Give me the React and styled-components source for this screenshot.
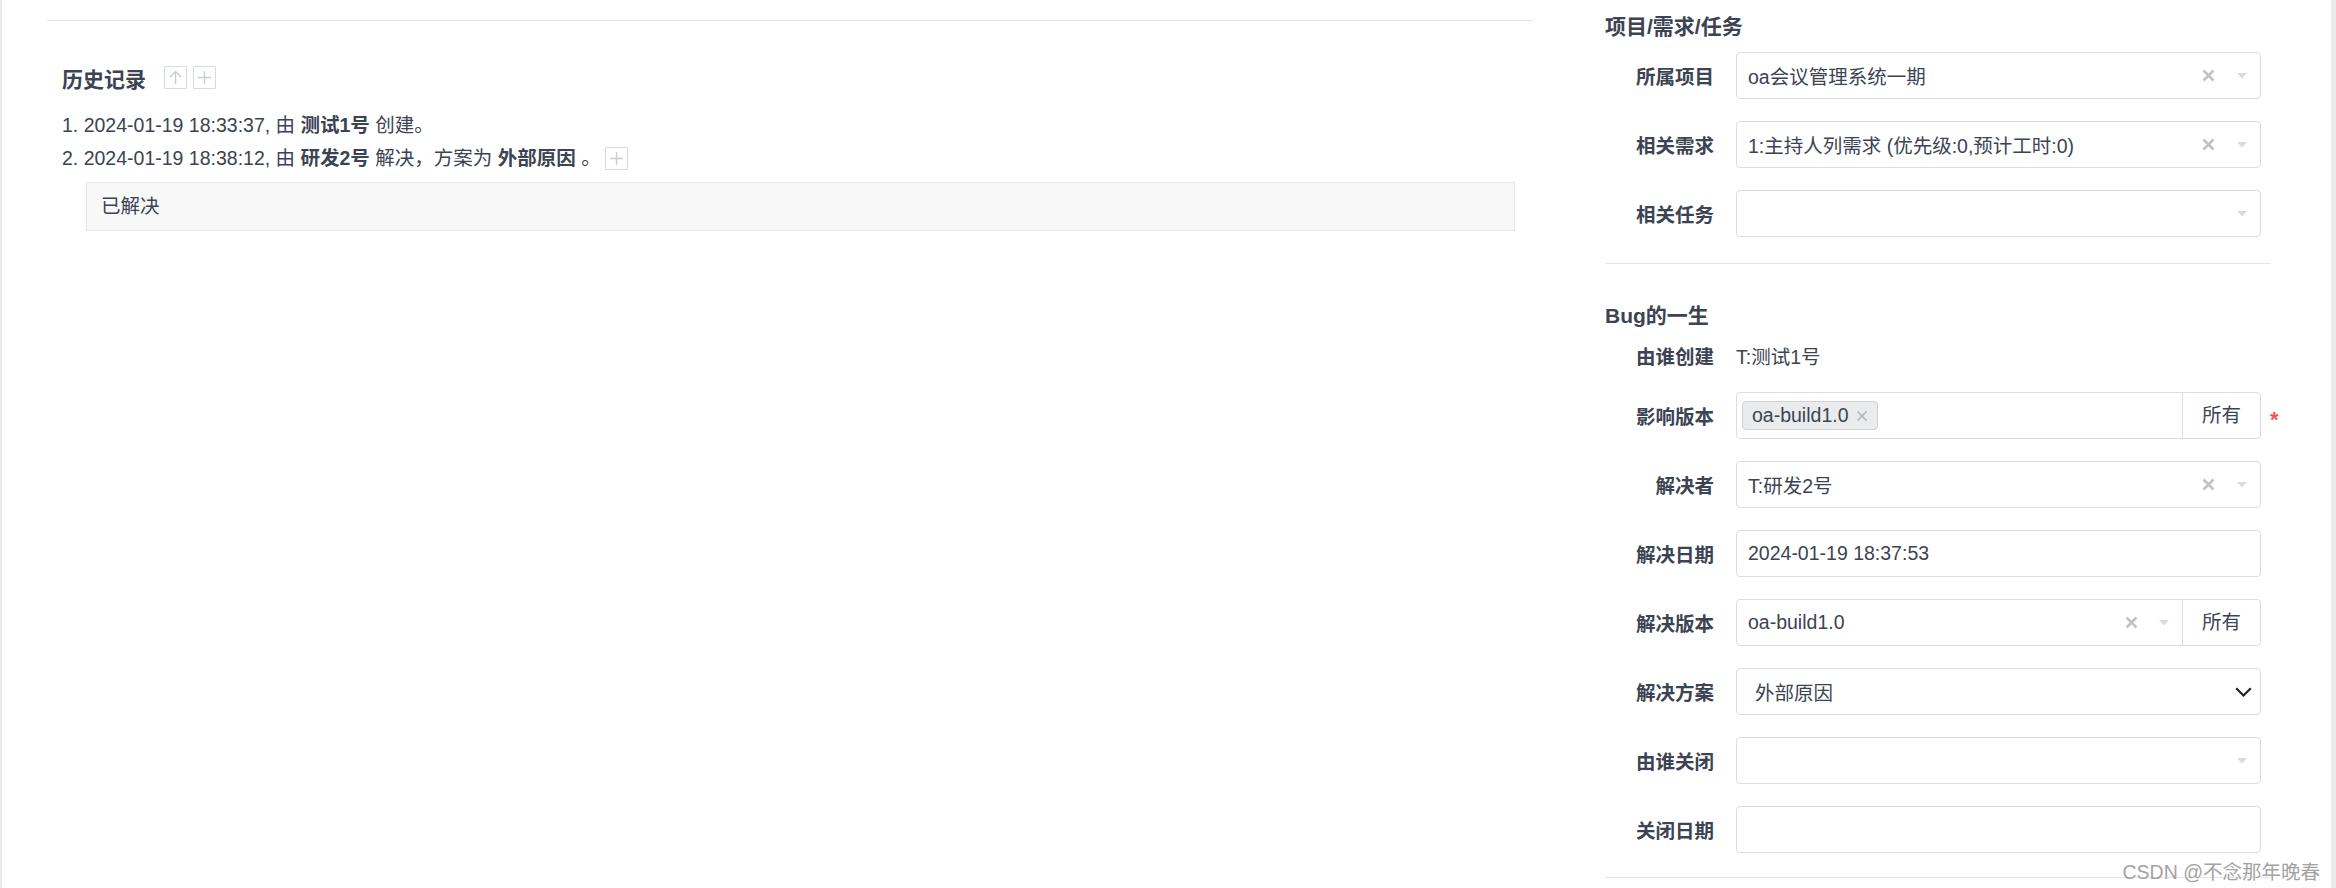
import styled, { createGlobalStyle } from 'styled-components';

const GlobalStyle = createGlobalStyle`
  html, body {
    margin: 0;
    padding: 0;
    background: #fff;
  }
  body {
    font-family: "Liberation Sans", Arial, "Noto Sans CJK SC", sans-serif;
    font-size: 19.5px;
    color: #3c4353;
  }
`;

// 页面骨架
const Page = styled.div`
  position: relative;
  display: flex;
  width: 2336px;
  height: 888px;
  overflow: hidden;
  background: #fff;
`;

const LeftEdge = styled.div`
  flex: none;
  width: 2px;
  background: #eaeaea;
`;

const Main = styled.div`
  flex: none;
  width: 1485px;
  margin-left: 45px;
  padding-top: 20px;
`;

const Rule = styled.div`
  height: 1px;
  background: #e5e5e5;
  margin-top: ${(p) => p.$top || 0}px;
`;

// 历史记录
const History = styled.section`
  padding: 45px 0 0 15px;
`;

const HistoryHead = styled.div`
  display: flex;
  align-items: center;
  height: 28px;
`;

const HeadTitle = styled.h3`
  margin: 0 18px 0 0;
  font-size: 21px;
  line-height: 28px;
  font-weight: 700;
`;

const IconBox = styled.span`
  display: inline-flex;
  align-items: center;
  justify-content: center;
  align-self: ${(p) => (p.$inline ? 'auto' : 'flex-start')};
  box-sizing: border-box;
  width: 23px;
  height: 23px;
  margin-right: ${(p) => p.$gap || 0}px;
  margin-left: ${(p) => p.$left || 0}px;
  border: 1px solid #d6dae3;
  border-radius: 1px;
  vertical-align: middle;
  background: #fff;
`;

const Records = styled.ol`
  list-style: none;
  margin: 15px 0 0;
  padding: 0;
`;

const Record = styled.li`
  display: flex;
  align-items: center;
  height: 33px;
  line-height: 33px;
  white-space: pre;
`;

const Strong = styled.b`
  font-weight: 700;
`;

const Comment = styled.div`
  box-sizing: border-box;
  width: 1429px;
  height: 49px;
  margin: 7px 0 0 24px;
  padding-left: 14px;
  border: 1px solid #e7e7e7;
  background: #f8f8f8;
  line-height: 47px;
`;

// 右侧表单
const Side = styled.aside`
  flex: none;
  width: 666px;
  margin-left: 73px;
  padding-top: 12px;
`;

const SectionTitle = styled.h3`
  margin: ${(p) => p.$top || 0}px 0 0;
  height: 30px;
  font-size: 21px;
  line-height: 30px;
  font-weight: 700;
`;

const Fields = styled.div`
  display: flex;
  flex-direction: column;
  gap: 22px;
  margin-top: ${(p) => p.$top || 0}px;
`;

const Field = styled.div`
  display: grid;
  grid-template-columns: 131px 525px 1fr;
  align-items: center;
  height: ${(p) => p.$h || 47}px;
`;

const Label = styled.div`
  padding-right: 22px;
  text-align: right;
  font-weight: 700;
`;

const Plain = styled.div`
  color: #3c4353;
`;

const Control = styled.div`
  display: flex;
  align-items: center;
  box-sizing: border-box;
  height: 47px;
  border: 1px solid #dcdde1;
  border-radius: 4px;
  background: #fff;
  overflow: hidden;
`;

const Picker = styled.div`
  flex: 1;
  display: flex;
  align-items: center;
  height: 100%;
  padding: 0 13px 0 ${(p) => (p.$tags ? 5 : 11)}px;
  min-width: 0;
`;

const Value = styled.span`
  flex: 1;
  white-space: nowrap;
`;

const Addon = styled.div`
  flex: none;
  box-sizing: border-box;
  width: 78px;
  height: 100%;
  border-left: 1px solid #dcdde1;
  text-align: center;
  line-height: 45px;
`;

const Tag = styled.span`
  display: inline-flex;
  align-items: center;
  gap: 7px;
  box-sizing: border-box;
  height: 29px;
  padding: 0 9px 0 9px;
  border: 1px solid #cfd2d6;
  border-radius: 4px;
  background: #eaebed;
`;

const NativeSelect = styled.div`
  flex: 1;
  display: flex;
  align-items: center;
  padding: 0 8px 0 18px;
`;

const Required = styled.span`
  margin-left: 9px;
  color: #f25555;
  font-size: 22px;
  font-weight: 700;
  line-height: 1;
  margin-top: 8px;
`;

const Scrollbar = styled.div`
  flex: none;
  width: 5px;
  margin-left: auto;
  background: #ebebeb;
`;

const Watermark = styled.div`
  position: absolute;
  right: 16px;
  top: 856px;
  font-size: 19.5px;
  color: #a3a3a3;
  text-shadow: 0 0 1px #fff;
  white-space: nowrap;
`;

// 小图标
const UpIcon = () => (
  <svg width="17" height="17" viewBox="0 0 17 17">
    <path d="M8.5 15V2.5M3 8l5.5-5.5L14 8" fill="none" stroke="#c7ccd6" strokeWidth="1.4" />
  </svg>
);

const PlusIcon = () => (
  <svg width="17" height="17" viewBox="0 0 17 17">
    <path d="M8.5 2v13M2 8.5h13" fill="none" stroke="#c7ccd6" strokeWidth="1.4" />
  </svg>
);

const Clear = ({ gap = 22 }) => (
  <svg width="13" height="13" viewBox="0 0 13 13" style={{ marginRight: gap, flex: 'none' }}>
    <path d="M1.5 1.5l10 10M11.5 1.5l-10 10" stroke="#c2c2c2" strokeWidth="2.6" />
  </svg>
);

const Caret = () => (
  <svg width="10" height="6" viewBox="0 0 10 6" style={{ flex: 'none' }}>
    <path d="M0 0h10L5 5.5z" fill="#dadada" />
  </svg>
);

const TagClose = () => (
  <svg width="12" height="12" viewBox="0 0 12 12">
    <path d="M1.5 1.5l9 9M10.5 1.5l-9 9" stroke="#b3b3b3" strokeWidth="1.5" />
  </svg>
);

const Chevron = () => (
  <svg width="17" height="10" viewBox="0 0 17 10" style={{ flex: 'none' }}>
    <path d="M1.2 1.2l7.3 7.3 7.3-7.3" fill="none" stroke="#222" strokeWidth="2.2" />
  </svg>
);

function SelectField({ label, value, clear = true }) {
  return (
    <Field>
      <Label>{label}</Label>
      <Control>
        <Picker>
          <Value>{value}</Value>
          {clear && <Clear />}
          <Caret />
        </Picker>
      </Control>
    </Field>
  );
}

function App() {
  return (
    <Page>
      <GlobalStyle />
      <LeftEdge />

      <Main>
        <Rule />
        <History>
          <HistoryHead>
            <HeadTitle>历史记录</HeadTitle>
            <IconBox $gap={6}><UpIcon /></IconBox>
            <IconBox><PlusIcon /></IconBox>
          </HistoryHead>
          <Records>
            <Record>
              1. 2024-01-19 18:33:37, 由 <Strong>测试1号</Strong> 创建。
            </Record>
            <Record>
              2. 2024-01-19 18:38:12, 由 <Strong>研发2号</Strong> 解决，方案为 <Strong>外部原因</Strong> 。
              <IconBox $inline $left={4}><PlusIcon /></IconBox>
            </Record>
          </Records>
          <Comment>已解决</Comment>
        </History>
      </Main>

      <Side>
        <SectionTitle>项目/需求/任务</SectionTitle>
        <Fields $top={10}>
          <SelectField label="所属项目" value="oa会议管理系统一期" />
          <SelectField label="相关需求" value="1:主持人列需求 (优先级:0,预计工时:0)" />
          <SelectField label="相关任务" value="" clear={false} />
        </Fields>
        <Rule $top={26} />

        <SectionTitle $top={37}>Bug的一生</SectionTitle>
        <Field $h={38} style={{ marginTop: 5 }}>
          <Label>由谁创建</Label>
          <Plain>T:测试1号</Plain>
        </Field>
        <Fields $top={18}>
          <Field>
            <Label>影响版本</Label>
            <Control>
              <Picker $tags>
                <Tag>oa-build1.0<TagClose /></Tag>
              </Picker>
              <Addon>所有</Addon>
            </Control>
            <Required>*</Required>
          </Field>
          <SelectField label="解决者" value="T:研发2号" />
          <Field>
            <Label>解决日期</Label>
            <Control>
              <Picker><Value>2024-01-19 18:37:53</Value></Picker>
            </Control>
          </Field>
          <Field>
            <Label>解决版本</Label>
            <Control>
              <Picker>
                <Value>oa-build1.0</Value>
                <Clear gap={21} />
                <Caret />
              </Picker>
              <Addon>所有</Addon>
            </Control>
          </Field>
          <Field>
            <Label>解决方案</Label>
            <Control>
              <NativeSelect>
                <Value>外部原因</Value>
                <Chevron />
              </NativeSelect>
            </Control>
          </Field>
          <SelectField label="由谁关闭" value="" clear={false} />
          <Field>
            <Label>关闭日期</Label>
            <Control />
          </Field>
        </Fields>
        <Rule $top={24} />
      </Side>

      <Scrollbar />
      <Watermark>CSDN @不念那年晚春</Watermark>
    </Page>
  );
}

export default App;
